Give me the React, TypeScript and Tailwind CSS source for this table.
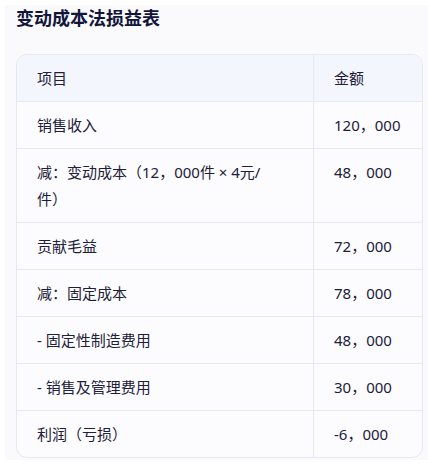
const rows: { item: string; amount: string }[] = [
  { item: "销售收入", amount: "120，000" },
  { item: "减：变动成本（12，000件 × 4元/件）", amount: "48，000" },
  { item: "贡献毛益", amount: "72，000" },
  { item: "减：固定成本", amount: "78，000" },
  { item: "- 固定性制造费用", amount: "48，000" },
  { item: "- 销售及管理费用", amount: "30，000" },
  { item: "利润（亏损）", amount: "-6，000" },
];

export default function App() {
  return (
    <div
      className="h-[467px] w-[428px] overflow-hidden bg-white pl-[5px] pt-[5px]"
      style={{ fontFamily: '"Noto Sans", "Noto Sans CJK SC", sans-serif' }}
    >
      <div className="w-[423px] bg-[#fafafc] pb-[2px] pl-[11px] pr-[5px]">
        <h2 className="mb-[22px] text-[18px] font-bold leading-[27px] text-[#12163a]">变动成本法损益表</h2>

        <div className="w-[407px] overflow-hidden rounded-[11px] border border-[#e7e8f0] bg-[#fcfcfe] text-[15px] leading-[27px] text-[#1c2038]">
          <div className="grid grid-cols-[297px_1fr] border-b border-[#e7e8f0] bg-[#f4f6fd]">
            <div className="border-r border-[#e7e8f0] px-5 py-[9.5px]">项目</div>
            <div className="px-5 py-[9.5px]">金额</div>
          </div>
          {rows.map((row, i) => (
            <div
              key={row.item}
              className={`grid grid-cols-[297px_1fr] ${i < rows.length - 1 ? "border-b border-[#e7e8f0]" : ""}`}
            >
              <div className="border-r border-[#e7e8f0] py-[9.5px] pl-5 pr-10">{row.item}</div>
              <div className="px-5 py-[9.5px]">{row.amount}</div>
            </div>
          ))}
        </div>
      </div>
    </div>
  );
}
